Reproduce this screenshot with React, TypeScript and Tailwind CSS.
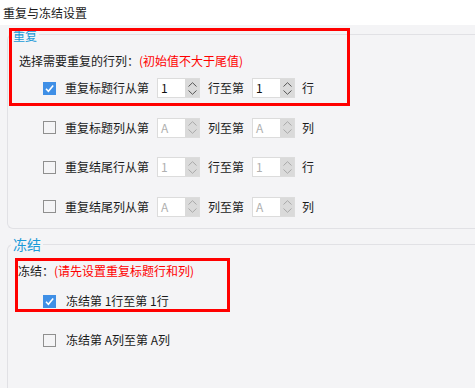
import { useState } from "react";

const font = { fontFamily: '"Noto Sans CJK SC", "Noto Sans", sans-serif' };

function Check({ checked, onClick }: { checked: boolean; onClick?: () => void }) {
    return (
        <button
            onClick={onClick}
            className={
                checked
                    ? "w-[13px] h-[13px] bg-[#3f8fe6] flex items-center justify-center shrink-0"
                    : "w-[13px] h-[13px] border border-[#8f8f8f] shrink-0"
            }
        >
            {checked && (
                <svg width="11" height="11" viewBox="0 0 11 11">
                    <path d="M2 5.8 L4.4 8.2 L9.2 2.6" fill="none" stroke="white" strokeWidth="1.6" />
                </svg>
            )}
        </button>
    );
}

function Spin({ value, disabled }: { value: string; disabled?: boolean }) {
    return (
        <div className="flex h-[20px] w-[43px] border border-[#dcdcdc] bg-white shrink-0">
            <div
                className={
                    disabled
                        ? "flex-1 pl-[3px] text-[12px] leading-[18px] text-[#b0b0b0]"
                        : "flex-1 pl-[3px] text-[12px] leading-[18px] text-[#111]"
                }
            >
                {value}
            </div>
            <div className="w-[14px] bg-[#dadada] flex flex-col items-center justify-center gap-[3px]">
                <svg width="9" height="5" viewBox="0 0 9 5">
                    <path d="M0.5 4.5 L4.5 0.7 L8.5 4.5" fill="none" stroke={disabled ? "#a8a8a8" : "#555"} strokeWidth="1" />
                </svg>
                <svg width="9" height="5" viewBox="0 0 9 5">
                    <path d="M0.5 0.5 L4.5 4.3 L8.5 0.5" fill="none" stroke={disabled ? "#a8a8a8" : "#555"} strokeWidth="1" />
                </svg>
            </div>
        </div>
    );
}

interface RowProps {
    label: string;
    mid: string;
    end: string;
    value: string;
    checked: boolean;
    onToggle: () => void;
}

function RepeatRow({ label, mid, end, value, checked, onToggle }: RowProps) {
    return (
        <div className="flex items-center h-[20px] pl-[35px]">
            <Check checked={checked} onClick={onToggle} />
            <span className="ml-[9px]">{label}</span>
            <div className="ml-[8px]">
                <Spin value={value} disabled={!checked} />
            </div>
            <span className="ml-[8px]">{mid}</span>
            <div className="ml-[8px]">
                <Spin value={value} disabled={!checked} />
            </div>
            <span className="ml-[7px]">{end}</span>
        </div>
    );
}

export default function App() {
    const [rows, setRows] = useState([true, false, false, false]);
    const [freeze, setFreeze] = useState([true, false]);

    const toggle = (i: number) => setRows(rows.map((v, j) => (j === i ? !v : v)));
    const toggleFreeze = (i: number) => setFreeze(freeze.map((v, j) => (j === i ? !v : v)));

    return (
        <div className="w-[475px] h-[388px] overflow-hidden text-[12px] text-[#1a1a1a] relative" style={font}>
            {/* 标题 */}
            <div className="h-[25px] bg-white pl-[3px] leading-[25px] text-[12px]">重复与冻结设置</div>

            <div className="h-[363px] bg-[#f4f4f6] pl-[7px] pt-[1px]">
                {/* 重复 */}
                <fieldset className="border border-[#e1e1e5] border-r-0 rounded-l-[6px] h-[203px]">
                    <legend className="ml-[3px] px-[2px] text-[12px] leading-[16px] text-[#1a9ad8]">
                        <span className="relative top-[2px]">重复</span>
                    </legend>
                    <div className="pl-[11px] pt-[9px] h-[20px] leading-[20px]">
                        选择需要重复的行列：<span className="text-[#ff0000]">(初始值不大于尾值)</span>
                    </div>
                    <div className="flex flex-col gap-[19.5px] mt-[16px]">
                        <RepeatRow label="重复标题行从第" mid="行至第" end="行" value="1" checked={rows[0]} onToggle={() => toggle(0)} />
                        <RepeatRow label="重复标题列从第" mid="列至第" end="列" value="A" checked={rows[1]} onToggle={() => toggle(1)} />
                        <RepeatRow label="重复结尾行从第" mid="行至第" end="行" value="1" checked={rows[2]} onToggle={() => toggle(2)} />
                        <RepeatRow label="重复结尾列从第" mid="列至第" end="列" value="A" checked={rows[3]} onToggle={() => toggle(3)} />
                    </div>
                </fieldset>

                {/* 冻结 */}
                <fieldset className="mt-[7px] border border-[#e1e1e5] border-r-0 rounded-l-[6px] h-[200px]">
                    <legend className="ml-[3px] px-[2px] text-[14px] leading-[16px] text-[#1a9ad8]">冻结</legend>
                    <div className="pl-[10px] pt-[9px] h-[20px] leading-[20px]">
                        冻结：<span className="text-[#ff0000]">(请先设置重复标题行和列)</span>
                    </div>
                    <div className="flex flex-col gap-[19px] mt-[19px]">
                        <div className="flex items-center h-[20px] pl-[35px]">
                            <Check checked={freeze[0]} onClick={() => toggleFreeze(0)} />
                            <span className="ml-[10px] whitespace-pre">冻结第 1行至第 1行</span>
                        </div>
                        <div className="flex items-center h-[20px] pl-[35px]">
                            <Check checked={freeze[1]} onClick={() => toggleFreeze(1)} />
                            <span className="ml-[10px] whitespace-pre">冻结第 A列至第 A列</span>
                        </div>
                    </div>
                </fieldset>
            </div>

            {/* 标注框 */}
            <div className="absolute left-[9px] top-[28px] w-[341px] h-[78px] border-[3px] border-[#ff0000] pointer-events-none" />
            <div className="absolute left-[15px] top-[258px] w-[215px] h-[54px] border-[3px] border-[#ff0000] pointer-events-none" />
        </div>
    );
}
